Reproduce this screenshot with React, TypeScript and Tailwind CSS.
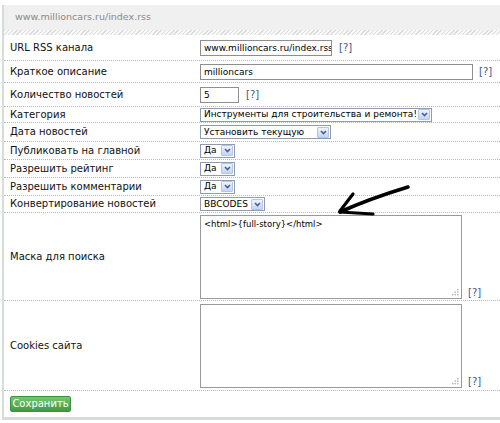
import type { ReactNode } from "react";

const font = { fontFamily: '"DejaVu Sans", Verdana, sans-serif' };

function Help({ className = "" }: { className?: string }) {
  return <span className={`text-[10px] text-[#3d5a8c] ${className}`}>[?]</span>;
}

function Row({
  label,
  h,
  children,
}: {
  label: string;
  h: string;
  children: ReactNode;
}) {
  return (
    <div className={`flex items-center border-b border-dotted border-[#b8b8b8] ${h}`}>
      <div className="w-[196px] shrink-0 pl-[6px] text-[10px] leading-none text-[#111]">
        {label}
      </div>
      <div className="flex min-w-0 flex-1 items-center">{children}</div>
    </div>
  );
}

function Input({ value, w }: { value: string; w: string }) {
  return (
    <div
      className={`h-[16px] shrink-0 overflow-hidden border border-[#8e8e8e] bg-white pl-[3px] ${w}`}
    >
      <div className="whitespace-nowrap pt-[2px] text-[9px] leading-[10px] text-black">{value}</div>
    </div>
  );
}

function Select({ value, w }: { value: string; w: string }) {
  return (
    <div
      className={`flex h-[14px] shrink-0 items-center justify-between border border-[#8e9bb0] bg-white text-[9px] leading-none text-black ${w}`}
    >
      <span className="overflow-hidden whitespace-nowrap pl-[3px]">{value}</span>
      <span className="mr-[1px] ml-[2px] flex h-[11px] w-[12px] shrink-0 items-center justify-center rounded-[1px] border border-[#b4c5e6] bg-gradient-to-b from-[#eef3fd] to-[#c3d4f7]">
        <svg width="7" height="5" viewBox="0 0 7 5">
          <path d="M1 1 L3.5 3.5 L6 1" fill="none" stroke="#4a5f8c" strokeWidth="1.6" />
        </svg>
      </span>
    </div>
  );
}

function TextArea({ value }: { value?: string }) {
  return (
    <div className="relative h-[84px] w-[262px] shrink-0 border border-[#9a9a9a] bg-white px-[3px] pt-[4px] text-[8.5px] leading-none text-black">
      {value}
      <svg className="absolute bottom-[2px] right-[2px]" width="7" height="7" viewBox="0 0 7 7">
        <rect x="5" y="0" width="1.4" height="1.4" fill="#b0b0b0" />
        <rect x="2.5" y="2.5" width="1.4" height="1.4" fill="#b0b0b0" />
        <rect x="5" y="2.5" width="1.4" height="1.4" fill="#b0b0b0" />
        <rect x="0" y="5" width="1.4" height="1.4" fill="#b0b0b0" />
        <rect x="2.5" y="5" width="1.4" height="1.4" fill="#b0b0b0" />
        <rect x="5" y="5" width="1.4" height="1.4" fill="#b0b0b0" />
      </svg>
    </div>
  );
}

export default function App() {
  return (
    <div className="relative h-[423px] w-[500px] overflow-hidden bg-white pt-[5px]" style={font}>
      <div className="ml-[2px] border-b-[3px] border-l-2 border-[#d6ddd6]">
        <div className="flex h-[25px] items-center bg-[#f0f0f0] pl-[11px] text-[9.5px] text-[#8a8a8a]">
          www.millioncars.ru/index.rss
        </div>
        <div className="h-[5px] bg-[repeating-linear-gradient(135deg,#dcdcdc_0px,#dcdcdc_1px,#f7f7f7_1px,#f7f7f7_3px)]" />

        <Row label="URL RSS канала" h="h-[26px]">
          <Input value="www.millioncars.ru/index.rss" w="w-[132px]" />
          <Help className="ml-[7px]" />
        </Row>
        <Row label="Краткое описание" h="h-[22px]">
          <Input value="millioncars" w="w-[273px]" />
          <Help className="ml-[6px]" />
        </Row>
        <Row label="Количество новостей" h="h-[24px]">
          <Input value="5" w="w-[39px]" />
          <Help className="ml-[7px]" />
        </Row>
        <Row label="Категория" h="h-[16px]">
          <Select value="Инструменты для строительства и ремонта!" w="w-[232px]" />
        </Row>
        <Row label="Дата новостей" h="h-[19px]">
          <Select value="Установить текущую" w="w-[131px]" />
        </Row>
        <Row label="Публиковать на главной" h="h-[18px]">
          <Select value="Да" w="w-[35px]" />
        </Row>
        <Row label="Разрешить рейтинг" h="h-[18px]">
          <Select value="Да" w="w-[35px]" />
        </Row>
        <Row label="Разрешить комментарии" h="h-[18px]">
          <Select value="Да" w="w-[35px]" />
        </Row>
        <Row label="Конвертирование новостей" h="h-[17px]">
          <Select value="BBCODES" w="w-[65px]" />
        </Row>
        <Row label="Маска для поиска" h="h-[88px]">
          <div className="flex items-end">
            <TextArea value="<html>{full-story}</html>" />
            <Help className="mb-[-1px] ml-[6px]" />
          </div>
        </Row>
        <Row label="Cookies сайта" h="h-[90px]">
          <div className="flex items-end">
            <TextArea />
            <Help className="mb-[-1px] ml-[6px]" />
          </div>
        </Row>

        <div className="flex h-[26px] items-center pl-[6px]">
          <button
            type="button"
            className="flex h-[16px] w-[61px] items-center justify-center rounded-[2px] border border-[#3f8f3f] bg-gradient-to-b from-[#74c774] to-[#3f9b3f] text-[10px] leading-none text-white"
          >
            Сохранить
          </button>
        </div>
      </div>

      {/* hand-drawn arrow pointing at the mask field */}
      <svg className="pointer-events-none absolute left-0 top-0" width="500" height="423">
        <path
          d="M408 187 C 385 194, 362 202, 340 212"
          fill="none"
          stroke="#000"
          strokeWidth="3.6"
          strokeLinecap="round"
        />
        <path d="M353 194 L340 211" fill="none" stroke="#000" strokeWidth="3.2" strokeLinecap="round" />
        <path d="M340 212 L373 214" fill="none" stroke="#000" strokeWidth="3.2" strokeLinecap="round" />
      </svg>
    </div>
  );
}
